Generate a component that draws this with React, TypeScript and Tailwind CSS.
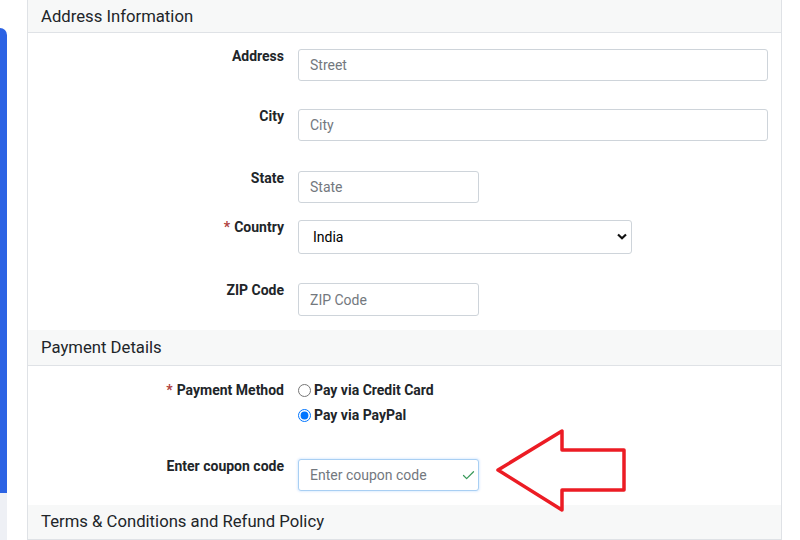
import { Check } from "lucide-react";

function SectionHeader({ title, h }: { title: string; h: string }) {
    return (
        <div className={`${h} flex items-center px-[13px] bg-[#f7f8f8] border-b border-[#dfe2e6] text-[16.7px] text-[#212529]`}>
            {title}
        </div>
    );
}

function Label({ text, required }: { text: string; required?: boolean }) {
    return (
        <div className="text-right text-[14px] leading-[14px] font-bold text-[#212529]">
            {required && <span className="text-[#b0413e] mr-[4px]">*</span>}
            {text}
        </div>
    );
}

function TextInput({ placeholder, w, h, mb }: { placeholder: string; w: string; h: string; mb: string }) {
    return (
        <input
            type="text"
            placeholder={placeholder}
            className={`${w} ${h} ${mb} border border-[#ced4da] rounded-[3px] pl-[11px] text-[14px] text-[#212529] placeholder:text-[#73787e] bg-white outline-none`}
        />
    );
}

export default function App() {
    return (
        <main className="w-[800px] h-[540px] overflow-hidden flex bg-white" style={{ fontFamily: "Roboto, 'Liberation Sans', sans-serif" }}>
            <div className="w-[27px] flex flex-col shrink-0">
                <div className="w-[7px] mt-[28px] h-[465px] bg-[#2c63e4] rounded-tr-[9px]" />
                <div className="w-[7px] flex-1 bg-[#eef0f5]" />
            </div>

            <div className="relative w-[755px] shrink-0 border-x border-[#dfe2e6] flex flex-col">
                <SectionHeader title="Address Information" h="h-[36px]" />
                <div className="grid grid-cols-[256px_1fr] gap-x-[14px] pr-[13px] pt-[16px] items-start">
                    <Label text="Address" />
                    <TextInput placeholder="Street" w="w-full" h="h-[32px]" mb="mb-[28px]" />

                    <Label text="City" />
                    <TextInput placeholder="City" w="w-full" h="h-[32px]" mb="mb-[30px]" />

                    <Label text="State" />
                    <TextInput placeholder="State" w="w-[181px]" h="h-[32px]" mb="mb-[17px]" />

                    <Label text="Country" required />
                    <div className="relative w-[334px] h-[34px] mb-[29px]">
                        <select className="appearance-none w-full h-full border border-[#ced4da] rounded-[3px] pl-[14px] text-[14px] text-black bg-white outline-none">
                            <option>India</option>
                        </select>
                        <svg className="absolute right-[5px] top-[13px] pointer-events-none" width="10" height="7" viewBox="0 0 10 7">
                            <path d="M1 1.5 L5 5.2 L9 1.5" fill="none" stroke="#111" strokeWidth="2.2" />
                        </svg>
                    </div>

                    <Label text="ZIP Code" />
                    <TextInput placeholder="ZIP Code" w="w-[181px]" h="h-[33px]" mb="mb-[14px]" />
                </div>

                <SectionHeader title="Payment Details" h="h-[38px]" />
                <div className="grid grid-cols-[256px_1fr] gap-x-[14px] pr-[13px] pt-[12px] items-start">
                    <div className="text-right text-[14px] leading-[25px] font-bold text-[#212529]">
                        <span className="text-[#b0413e] mr-[4px]">*</span>Payment Method
                    </div>
                    <div className="flex flex-col mb-[31px] text-[14px] leading-[25px] font-bold text-[#212529]">
                        <label className="flex items-center gap-[3px]">
                            <input type="radio" name="pay" className="m-0 w-[13px] h-[13px]" />
                            Pay via Credit Card
                        </label>
                        <label className="flex items-center gap-[3px]">
                            <input type="radio" name="pay" defaultChecked className="m-0 w-[13px] h-[13px] accent-[#0075ff]" />
                            Pay via PayPal
                        </label>
                    </div>

                    <Label text="Enter coupon code" />
                    <div className="relative w-[181px] h-[32px] mb-[14px]">
                        <input
                            type="text"
                            placeholder="Enter coupon code"
                            className="w-full h-full border border-[#a9cff3] rounded-[3px] pl-[11px] text-[14px] placeholder:text-[#73787e] bg-white outline-none shadow-[0_0_2px_1px_rgba(0,123,255,0.12)]"
                        />
                        <Check className="absolute right-[3px] top-[9px] text-[#3a9a5b]" size={15} strokeWidth={2} />
                    </div>
                </div>

                <SectionHeader title="Terms & Conditions and Refund Policy" h="h-[38px]" />
                <div className="flex-1" />

                <svg className="absolute left-[468px] top-[428px] pointer-events-none" width="130" height="86" viewBox="468 428 130 86">
                    <polygon
                        points="470,470 534,431 534,450 596,450 596,490 534,490 534,510"
                        fill="white"
                        stroke="#ec1c24"
                        strokeWidth="3.5"
                        strokeLinejoin="round"
                    />
                </svg>
            </div>
        </main>
    );
}
